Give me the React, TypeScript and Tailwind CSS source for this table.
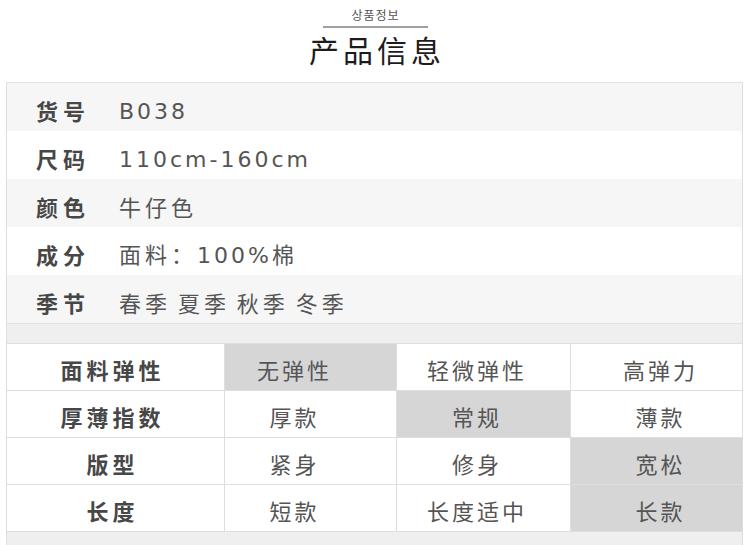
import React from 'react';

// latin runs get a wider face so they read like the original
const Latin: React.FC<{ children: React.ReactNode }> = ({ children }) => (
  <span className="tracking-[3px]" style={{ fontFamily: '"DejaVu Sans", sans-serif' }}>
    {children}
  </span>
);

const info: { label: string; value: React.ReactNode }[] = [
  { label: '货号', value: <Latin>B038</Latin> },
  { label: '尺码', value: <Latin>110cm-160cm</Latin> },
  { label: '颜色', value: '牛仔色' },
  { label: '成分', value: <>面料：<Latin>100%</Latin>棉</> },
  { label: '季节', value: '春季 夏季 秋季 冬季' },
];

// which option in each row is selected (index 0..2)
const specs = [
  { label: '面料弹性', options: ['无弹性', '轻微弹性', '高弹力'], active: 0 },
  { label: '厚薄指数', options: ['厚款', '常规', '薄款'], active: 1 },
  { label: '版型', options: ['紧身', '修身', '宽松'], active: 2 },
  { label: '长度', options: ['短款', '长度适中', '长款'], active: 2 },
];

const colWidth = ['w-[172px]', 'w-[174px]', 'flex-1'];
const colPad = ['pr-[32px]', 'pr-[13px]', 'pl-[8px]'];

const App: React.FC = () => {
  return (
    <div
      className="w-[750px] h-[545px] bg-white overflow-hidden"
      style={{ fontFamily: '"Noto Sans CJK SC", "Noto Sans CJK KR", "Noto Sans", sans-serif' }}
    >
      <div className="h-[82px] flex flex-col items-center">
        <div className="mt-[7px] text-[12px] leading-[16px] text-[#555] tracking-[1px] pl-[1px]">상품정보</div>
        <div className="mt-[3px] w-[105px] h-[2px] bg-[#a0a0a0]" />
        <div className="mt-[1px] text-[30px] leading-[40px] text-[#1c1c1c] tracking-[4px] pl-[4px]">产品信息</div>
      </div>

      <div className="ml-[6px] w-[737px] h-[463px] bg-[#efefef] border-x border-[#dedede]">
        <div className="border-t border-b border-[#e2e2e2]">
          {info.map((row, i) => (
            <div
              key={row.label}
              className={`h-[48px] flex items-center pt-[6px] pl-[29px] ${i % 2 === 0 ? 'bg-[#f6f6f6]' : 'bg-white'}`}
            >
              <span className="w-[83px] text-[22px] font-bold text-[#474747] tracking-[5px]">{row.label}</span>
              <span className="text-[22px] text-[#555] tracking-[4px] [word-spacing:-2px]">{row.value}</span>
            </div>
          ))}
        </div>

        <div className="h-[19px]" />

        <div className="border-t border-[#dedede] bg-white">
          {specs.map((row) => (
            <div key={row.label} className="h-[47px] flex border-b border-[#dedede]">
              <div className="w-[218px] flex items-center justify-center pt-[4px] pr-[6px] border-r border-[#dedede] text-[22px] font-bold text-[#474747] tracking-[4px]">
                {row.label}
              </div>
              {row.options.map((opt, j) => (
                <div
                  key={opt}
                  className={`${colWidth[j]} ${colPad[j]} flex items-center justify-center pt-[4px] text-[22px] text-[#555] tracking-[3px] ${j < 2 ? 'border-r border-[#dedede]' : ''} ${row.active === j ? 'bg-[#d6d6d6]' : ''}`}
                >
                  {opt}
                </div>
              ))}
            </div>
          ))}
        </div>
      </div>
    </div>
  );
};

export default App;
